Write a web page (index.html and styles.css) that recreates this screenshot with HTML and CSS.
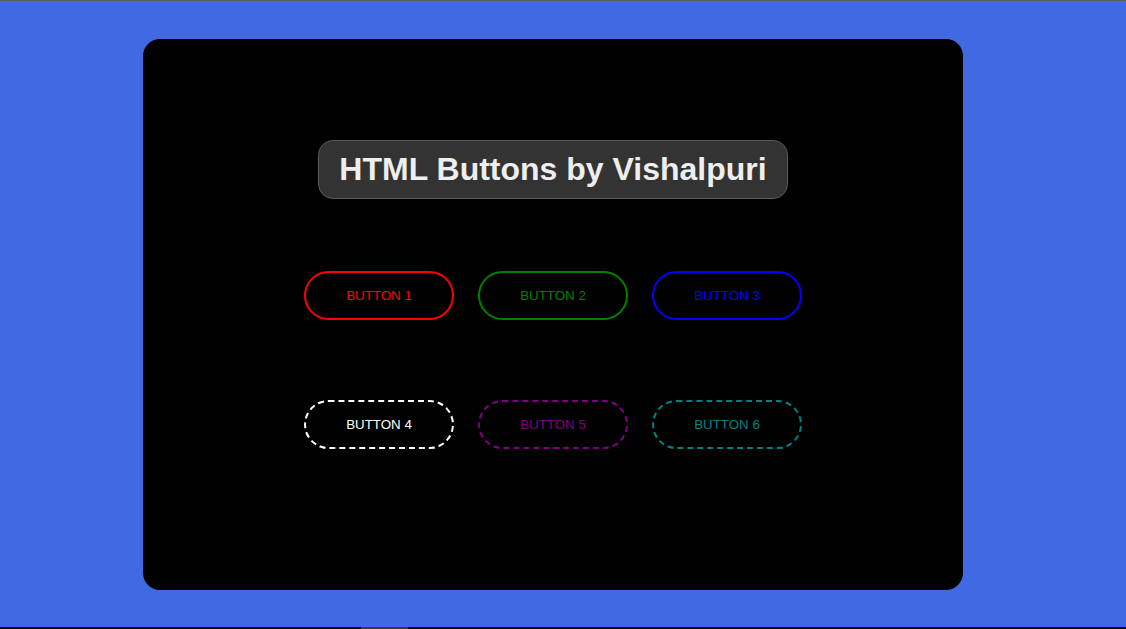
FILE: index.html
```html
<!DOCTYPE html>
<html lang="en">
<head>
<meta charset="utf-8">
<title>HTML Buttons by Vishalpuri</title>
<link rel="stylesheet" href="styles.css">
</head>
<body>
<div class="page">
  <div class="topline"></div>
  <main class="stage">
    <section class="card">
      <h1 class="title">HTML Buttons by Vishalpuri</h1>
      <div class="grid">
        <button class="btn solid red">BUTTON 1</button>
        <button class="btn solid green">BUTTON 2</button>
        <button class="btn solid blue">BUTTON 3</button>
        <button class="btn dashed white">BUTTON 4</button>
        <button class="btn dashed purple">BUTTON 5</button>
        <button class="btn dashed teal">BUTTON 6</button>
      </div>
    </section>
  </main>
  <div class="bottomline"><span class="seg"></span></div>
</div>
</body>
</html>
```
FILE: styles.css
```css
html, body {
  margin: 0;
  padding: 0;
  height: 100%;
}
body {
  background: #4169e1;
  font-family: "Liberation Sans", Arial, sans-serif;
  overflow: hidden;
}
.page {
  height: 629px;
  display: flex;
  flex-direction: column;
}
.topline {
  height: 1px;
  background: #5f5f63;
}
.stage {
  flex: 1;
  padding: 38px 0 0 143px;
}
.bottomline {
  height: 2px;
  background: #0d0d14;
  display: flex;
}
.seg {
  width: 47px;
  margin-left: 361px;
  background: #3a3a3e;
}
.card {
  width: 820px;
  height: 551px;
  box-sizing: border-box;
  background: #000;
  border-radius: 17px;
  padding-top: 101px;
  display: flex;
  flex-direction: column;
  align-items: center;
}
.title {
  margin: 0;
  background: #333;
  border: 1px solid #5a5a5a;
  border-radius: 15px;
  padding: 10px 20px;
  color: #eeeeee;
  font-size: 32px;
  line-height: 37px;
  font-weight: bold;
}
.grid {
  margin-top: 72px;
  display: grid;
  grid-template-columns: repeat(3, 150px);
  column-gap: 24px;
  row-gap: 80px;
}
.btn {
  width: 150px;
  height: 49px;
  box-sizing: border-box;
  background: transparent;
  border-radius: 25px;
  font-family: "Liberation Sans", Arial, sans-serif;
  font-size: 13.333px;
  padding: 0;
  cursor: pointer;
}
.solid { border: 2px solid; }
.dashed { border: 2px dashed; }
.red { border-color: #ff0000; color: #ff0000; }
.green { border-color: #008000; color: #008000; }
.blue { border-color: #0000ff; color: #0000ff; }
.white { border-color: #ffffff; color: #ffffff; }
.purple { border-color: #800080; color: #800080; }
.teal { border-color: #008080; color: #008080; }
```
